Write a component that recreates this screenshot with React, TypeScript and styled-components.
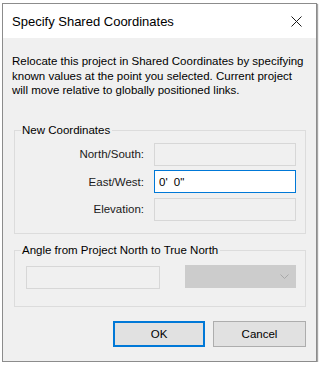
import React from "react";
import styled, { createGlobalStyle } from "styled-components";

const GlobalStyle = createGlobalStyle`
    html, body {
        margin: 0;
        padding: 0;
        background: #ffffff;
    }

    body {
        font-family: "Liberation Sans", Arial, sans-serif;
    }
`;

const Window = styled.div`
    display: flex;
    flex-direction: column;

    width: 315px;
    height: 359px;
    margin: 3px 0 0 2px;

    box-sizing: border-box;
    border: 1px solid #8c8c8c;
    box-shadow: 1px 1px 1px rgba(0, 0, 0, 0.35);

    background-color: #f0f0f0;
`;

const TitleBar = styled.div`
    display: flex;
    flex-direction: row;
    align-items: center;
    justify-content: space-between;

    height: 34px;
    padding: 0 14px 0 9px;

    background-color: #ffffff;
`;

const Title = styled.span`
    font-size: 13px;

    color: #000000;
`;

const CloseIcon = styled.svg`
    width: 11px;
    height: 11px;
`;

const Content = styled.div`
    display: flex;
    flex-direction: column;

    padding: 16px 10px 13px 9px;
`;

const Description = styled.p`
    margin: 0 0 25px 0;

    font-size: 11.5px;
    line-height: 14.5px;

    color: #000000;
`;

const Group = styled.fieldset<{ pad: string }>`
    margin: 0 0 0 2px;
    padding: ${props => props.pad};
    min-width: 0;

    border: 1px solid #dcdcdc;
    border-radius: 0;
`;

const Legend = styled.legend`
    margin-left: -3px;
    padding: 0 2px 0 1px;

    font-size: 11.5px;
    line-height: 15px;

    color: #000000;
`;

const FieldGrid = styled.div`
    display: grid;
    grid-template-columns: 120px 142px;
    column-gap: 10px;
    row-gap: 4.5px;
    align-items: center;
`;

const Label = styled.span`
    text-align: right;

    font-size: 11.5px;

    color: #1a1a1a;
`;

const TextBox = styled.div<{ active?: boolean; width?: number }>`
    display: flex;
    align-items: center;

    width: ${props => props.width ? `${props.width}px` : "auto"};
    height: 23px;
    padding: 0 4px;

    box-sizing: border-box;
    border: 1px solid ${props => props.active ? "#0078d7" : "#d7d7d7"};

    background-color: ${props => props.active ? "#ffffff" : "#f0f0f0"};

    font-size: 11.5px;
    word-spacing: 3px;

    color: #000000;
`;

const AngleRow = styled.div`
    display: flex;
    flex-direction: row;
    align-items: flex-start;
    justify-content: space-between;

    margin-left: 2px;
`;

const Combo = styled.div`
    display: flex;
    align-items: center;
    justify-content: flex-end;

    width: 111px;
    height: 23px;
    margin-top: -1px;
    padding-right: 6px;

    box-sizing: border-box;
    border: 1px solid #cccccc;

    background-color: #cccccc;
`;

const Chevron = styled.svg`
    width: 9px;
    height: 5px;
`;

const ButtonRow = styled.div`
    display: flex;
    flex-direction: row;
    justify-content: flex-end;
    gap: 8px;

    margin-top: 14px;
`;

const Button = styled.div<{ primary?: boolean }>`
    display: flex;
    align-items: center;
    justify-content: center;

    width: ${props => props.primary ? "92px" : "93px"};
    height: 26px;

    box-sizing: border-box;
    border: 1px solid ${props => props.primary ? "#0078d7" : "#adadad"};
    box-shadow: ${props => props.primary ? "inset 0 0 0 1px #0078d7" : "none"};

    background-color: #e1e1e1;

    font-size: 11.5px;

    color: #000000;
`;

const coordinateFields = [
    { label: "North/South:", value: "" },
    { label: "East/West:", value: "0'  0\"", active: true },
    { label: "Elevation:", value: "" },
];

export default function App() {
    return (
        <>
            <GlobalStyle />
            <Window>
                <TitleBar>
                    <Title>Specify Shared Coordinates</Title>
                    <CloseIcon viewBox="0 0 11 11">
                        <path d="M0.5 0.5 L10.5 10.5 M10.5 0.5 L0.5 10.5" stroke="#1a1a1a" strokeWidth="1" fill="none" />
                    </CloseIcon>
                </TitleBar>
                <Content>
                    <Description>
                        Relocate this project in Shared Coordinates by specifying known values at the point you selected. Current project will move relative to globally positioned links.
                    </Description>
                    <Group pad="5px 9px 12px 9px">
                        <Legend>New Coordinates</Legend>
                        <FieldGrid>
                            {coordinateFields.map(field =>
                                <React.Fragment key={field.label}>
                                    <Label>{field.label}</Label>
                                    <TextBox active={field.active}>{field.value}</TextBox>
                                </React.Fragment>
                            )}
                        </FieldGrid>
                    </Group>
                    <Group pad="8px 9px 17px 9px" style={{ marginTop: 9 }}>
                        <Legend>Angle from Project North to True North</Legend>
                        <AngleRow>
                            <TextBox width={134} />
                            <Combo>
                                <Chevron viewBox="0 0 9 5">
                                    <path d="M0.5 0.5 L4.5 4.5 L8.5 0.5" stroke="#a8a8a8" strokeWidth="1" fill="none" />
                                </Chevron>
                            </Combo>
                        </AngleRow>
                    </Group>
                    <ButtonRow>
                        <Button primary>OK</Button>
                        <Button>Cancel</Button>
                    </ButtonRow>
                </Content>
            </Window>
        </>
    );
}
